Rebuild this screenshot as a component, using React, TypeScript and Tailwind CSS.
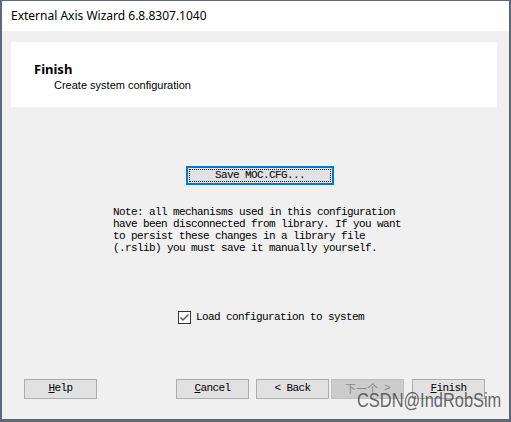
import React from "react";

const mono = { fontFamily: '"Liberation Mono", "DejaVu Sans Mono", monospace' } as React.CSSProperties;

function Btn({ children, className = "", disabled = false }: { children: React.ReactNode; className?: string; disabled?: boolean }) {
  return (
    <div
      className={
        "w-[73px] h-[20px] flex items-center justify-center text-[11px] tracking-[-0.6px] border " +
        (disabled ? "bg-[#cccccc] border-[#bfbfbf] text-[#8a8a8a]" : "bg-[#e1e1e1] border-[#adadad] text-black") +
        " " +
        className
      }
      style={mono}
    >
      {children}
    </div>
  );
}

export default function App() {
  return (
    <div className="w-[511px] h-[422px] border-l-2 border-r-2 border-t border-b-[3px] border-[#5e6878] bg-[#f0f0f0] flex flex-col relative overflow-hidden">
      <div className="h-[30px] bg-white flex items-center pl-[9px] text-[12px] text-black" style={{ fontFamily: '"Noto Sans", sans-serif' }}>
        External Axis Wizard 6.8.8307.1040
      </div>
      <div className="flex-1 flex flex-col">
        <div className="mt-[11px] ml-[9px] w-[486px] h-[65px] bg-white flex flex-col pl-[23px] pt-[19px]">
          <div className="text-[13px] font-bold leading-[16px] text-black" style={{ fontFamily: '"Noto Sans", sans-serif' }}>Finish</div>
          <div className="text-[11px] leading-[14px] ml-[20px] mt-px text-black" style={{ fontFamily: '"Liberation Sans", Arial, sans-serif' }}>Create system configuration</div>
        </div>
        <div className="mt-[59px] ml-[184px] w-[148px] h-[19px] border-2 border-[#0078d7] bg-[#e1e1e1] p-px">
          <div className="w-full h-full border border-dotted border-black flex items-center justify-center text-[11px] tracking-[-0.6px] text-black" style={mono}>
            Save MOC.CFG...
          </div>
        </div>
        <div className="mt-[21px] ml-[111px] text-[11px] leading-[12px] tracking-[-0.6px] text-black whitespace-pre" style={mono}>
          {"Note: all mechanisms used in this configuration\nhave been disconnected from library. If you want\nto persist these changes in a library file\n(.rslib) you must save it manually yourself."}
        </div>
        <div className="mt-[55px] ml-[176px] flex items-center gap-[5px]">
          <svg width="13" height="13" viewBox="0 0 13 13">
            <rect x="0.5" y="0.5" width="12" height="12" fill="white" stroke="#333" />
            <path d="M2.5 6.5 L5 9 L10.5 3.5" fill="none" stroke="#555" strokeWidth="1.4" />
          </svg>
          <span className="text-[11px] tracking-[-0.6px] text-black" style={mono}>Load configuration to system</span>
        </div>
        <div className="mt-[53px] ml-[22px] flex">
          <Btn>
            <span className="underline">H</span>elp
          </Btn>
          <Btn className="ml-[79px]">
            <span className="underline">C</span>ancel
          </Btn>
          <Btn className="ml-[7px]">&lt; Back</Btn>
          <Btn className="ml-[2px]" disabled>
            <span style={{ fontFamily: '"Noto Sans CJK SC", sans-serif' }} className="tracking-normal">下一个</span>
            <span className="ml-[6px]">&gt;</span>
          </Btn>
          <Btn className="ml-[8px]">
            <span className="underline">F</span>inish
          </Btn>
        </div>
      </div>
      <div
        className="absolute left-[355px] top-[387px] text-[20px] leading-[24px] text-[#4a4a4a]/85 origin-left scale-x-[0.82] whitespace-nowrap"
        style={{ fontFamily: '"Liberation Sans", Arial, sans-serif' }}
      >
        CSDN@IndRobSim
      </div>
    </div>
  );
}
